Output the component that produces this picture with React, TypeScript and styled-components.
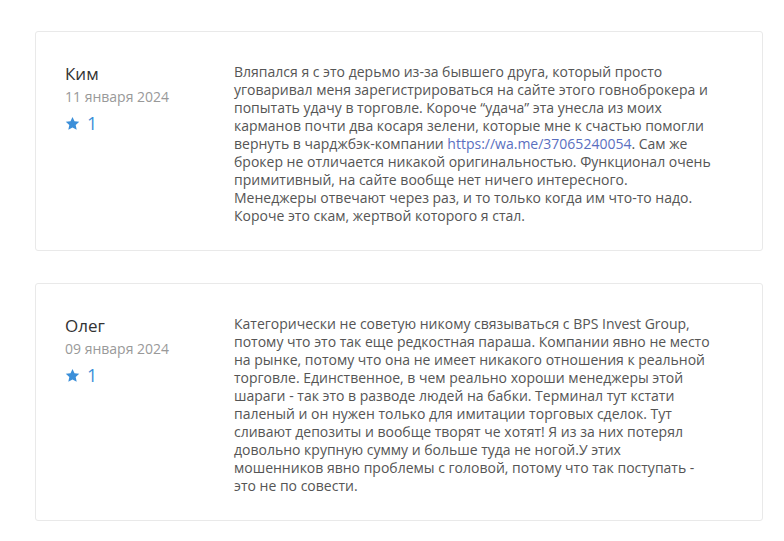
import React from "react";
import styled, { createGlobalStyle } from "styled-components";

const Global = createGlobalStyle`
  html, body { margin: 0; padding: 0; background: #fff; }
  body { font-family: "Open Sans", "Noto Sans", sans-serif; }
`;

const Page = styled.div`
  display: flex;
  flex-direction: column;
  gap: 32px;
  padding: 31px 21px 20px 35px;
`;

const Card = styled.div`
  display: grid;
  grid-template-columns: 169px 1fr;
  border: 1px solid #e9e9e9;
  border-radius: 3px;
  padding: 31px 28px 25px 29px;
`;

const Meta = styled.div`
  display: flex;
  flex-direction: column;
`;

const Name = styled.div`
  font-size: 17px;
  line-height: 22px;
  color: #333;
`;

const DateText = styled.div`
  font-size: 14px;
  line-height: 22px;
  color: #999;
  margin-top: 1px;
`;

const Rating = styled.div`
  display: flex;
  align-items: center;
  gap: 7px;
  margin-top: 4px;
  color: #3b8fd9;
  font-size: 18px;
  line-height: 22px;
`;

const Body = styled.p`
  margin: 0;
  max-width: 478px;
  font-size: 14px;
  line-height: 18px;
  color: #555;
`;

const Link = styled.a`
  color: #5a6fbf;
  text-decoration: none;
`;

const Star = () => (
  <svg width="15" height="15" viewBox="0 0 24 24" fill="#3b8fd9">
    <path d="M12 1.5l3.2 7 7.6.8-5.7 5.2 1.6 7.5L12 18.2 5.3 22l1.6-7.5L1.2 9.3l7.6-.8z" />
  </svg>
);

type Review = { name: string; date: string; rating: number; body: React.ReactNode };

const reviews: Review[] = [
  {
    name: "Ким",
    date: "11 января 2024",
    rating: 1,
    body: (
      <>
        Вляпался я с это дерьмо из-за бывшего друга, который просто уговаривал меня зарегистрироваться на сайте этого говноброкера и попытать удачу в торговле. Короче “удача” эта унесла из моих карманов почти два косаря зелени, которые мне к счастью помогли вернуть в чарджбэк-компании{" "}
        <Link href="#">https://wa.me/37065240054</Link>. Сам же брокер не отличается никакой оригинальностью. Функционал очень примитивный, на сайте вообще нет ничего интересного. Менеджеры отвечают через раз, и то только когда им что-то надо. Короче это скам, жертвой которого я стал.
      </>
    ),
  },
  {
    name: "Олег",
    date: "09 января 2024",
    rating: 1,
    body: (
      <>
        Категорически не советую никому связываться с BPS Invest Group, потому что это так еще редкостная параша. Компании явно не место на рынке, потому что она не имеет никакого отношения к реальной торговле. Единственное, в чем реально хороши менеджеры этой шараги - так это в разводе людей на бабки. Терминал тут кстати паленый и он нужен только для имитации торговых сделок. Тут сливают депозиты и вообще творят че хотят! Я из за них потерял довольно крупную сумму и больше туда не ногой.У этих мошенников явно проблемы с головой, потому что так поступать - это не по совести.
      </>
    ),
  },
];

export default function App() {
  return (
    <>
      <Global />
      <Page>
        {reviews.map((r) => (
          <Card key={r.name}>
            <Meta>
              <Name>{r.name}</Name>
              <DateText>{r.date}</DateText>
              <Rating>
                <Star />
                {r.rating}
              </Rating>
            </Meta>
            <Body>{r.body}</Body>
          </Card>
        ))}
      </Page>
    </>
  );
}
